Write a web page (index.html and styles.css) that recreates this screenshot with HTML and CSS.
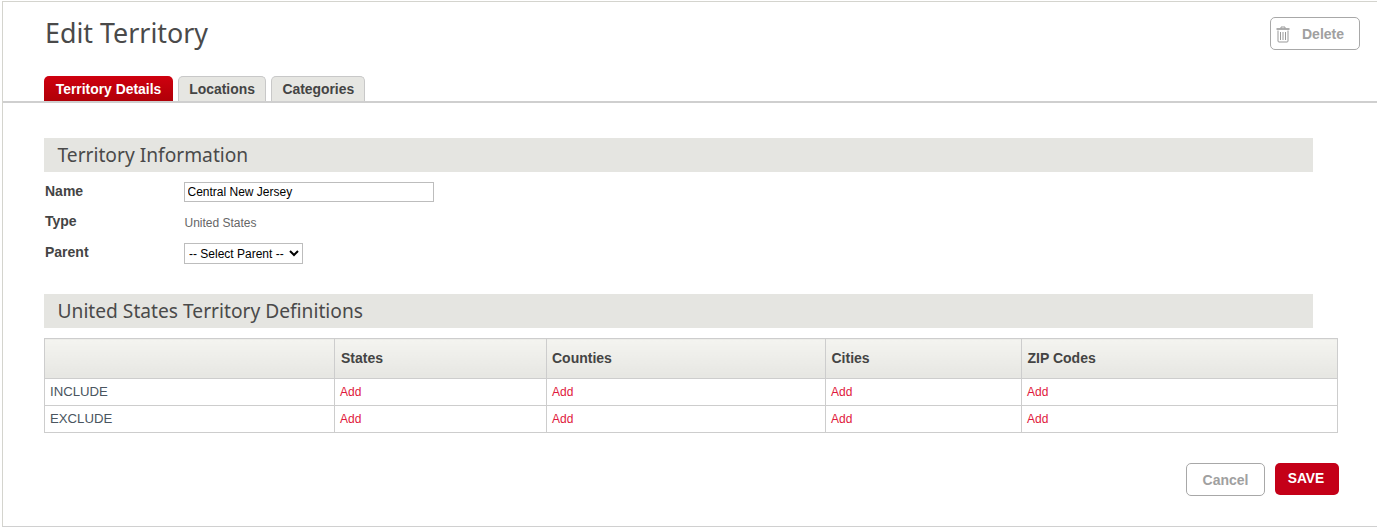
FILE: index.html
```html
<!DOCTYPE html>
<html lang="en">
<head>
<meta charset="utf-8">
<title>Edit Territory</title>
<link rel="stylesheet" href="styles.css">
</head>
<body>
<div class="frame">
  <header class="head">
    <h1 class="title">Edit Territory</h1>
    <button class="btn-delete" type="button">
      <svg class="trash" width="14" height="17" viewBox="0 0 14 17" fill="none" stroke="#999" stroke-width="1">
        <path d="M5 2.500V1h4v1.500"/>
        <path d="M0.500 3h13" stroke-width="1.600"/>
        <path d="M2 4.500V15a1 1 0 0 0 1 1h8a1 1 0 0 0 1-1V4.500"/>
        <path d="M4.500 6v8M7 6v8M9.500 6v8"/>
      </svg>
      <span>Delete</span>
    </button>
  </header>
  <nav class="tabs">
    <a class="tab active">Territory Details</a>
    <a class="tab">Locations</a>
    <a class="tab">Categories</a>
  </nav>
  <main class="content">
    <h2 class="section">Territory Information</h2>
    <div class="form">
      <div class="row row-name">
        <label class="lab">Name</label>
        <input class="inp" type="text" value="Central New Jersey">
      </div>
      <div class="row row-type">
        <label class="lab">Type</label>
        <span class="val">United States</span>
      </div>
      <div class="row row-parent">
        <label class="lab">Parent</label>
        <select class="sel"><option>-- Select Parent --</option></select>
      </div>
    </div>
    <h2 class="section second">United States Territory Definitions</h2>
    <table class="defs">
      <colgroup>
        <col class="c0"><col class="c1"><col class="c2"><col class="c3"><col class="c4">
      </colgroup>
      <thead>
        <tr><th></th><th>States</th><th>Counties</th><th>Cities</th><th>ZIP Codes</th></tr>
      </thead>
      <tbody>
        <tr><td class="rowname">INCLUDE</td><td><a class="add">Add</a></td><td><a class="add">Add</a></td><td><a class="add">Add</a></td><td><a class="add">Add</a></td></tr>
        <tr><td class="rowname">EXCLUDE</td><td><a class="add">Add</a></td><td><a class="add">Add</a></td><td><a class="add">Add</a></td><td><a class="add">Add</a></td></tr>
      </tbody>
    </table>
    <div class="actions">
      <button class="btn-cancel" type="button">Cancel</button>
      <button class="btn-save" type="button">SAVE</button>
    </div>
  </main>
</div>
</body>
</html>
```
FILE: styles.css
```css
* { box-sizing: border-box; }
html, body { margin: 0; padding: 0; background: #fff; }
body { height: 527px; overflow: hidden; font-family: "Liberation Sans", Arial, sans-serif; }
.frame {
  margin: 1px 0 0 2px;
  height: 526px;
  border-top: 1px solid #d4d4ce;
  border-left: 1px solid #d4d4ce;
  border-bottom: 1px solid #d0d0d0;
}
.head {
  display: flex;
  justify-content: space-between;
  align-items: flex-start;
  height: 74px;
  padding: 14px 17px 0 42px;
}
.title {
  margin: 0;
  font: 400 26.850px/34px "Noto Sans", "Open Sans", sans-serif;
  color: #4a4a4a;
}
.btn-delete {
  display: flex;
  align-items: center;
  width: 90px;
  height: 33px;
  margin-top: 1px;
  padding: 0 0 0 5px;
  background: #fff;
  border: 1px solid #a8a8a8;
  border-radius: 5px;
  color: #a0a0a0;
  font: 700 14px "Liberation Sans", Arial, sans-serif;
}
.trash { flex: none; margin: 2px 12px 0 0; }
.tabs {
  display: flex;
  gap: 5px;
  height: 27px;
  padding-left: 41px;
  border-bottom: 2px solid #cfcfcf;
}
.tab {
  height: 25px;
  padding: 0 10.250px;
  border: 1px solid #c8c8c8;
  border-bottom: 0;
  border-radius: 5px 5px 0 0;
  background: #e6e6e2;
  color: #444;
  font: 700 13.900px/25px "Liberation Sans", Arial, sans-serif;
}
.tab.active {
  padding: 0 11.750px;
  border: 0;
  background: linear-gradient(#cf000f, #b00008);
  color: #fff;
  line-height: 27px;
}
.content { padding: 35px 0 0 41px; }
.section {
  width: 1269px;
  height: 34px;
  margin: 0;
  padding-left: 13.500px;
  background: #e5e5e1;
  color: #4a4a4a;
  font: 400 19.200px/34px "Noto Sans", "Open Sans", sans-serif;
}
.section.second { margin-top: 30px; }
.form { padding-top: 10px; }
.row { display: flex; }
.row-name { height: 20px; align-items: center; }
.row-type { height: 21px; margin-top: 9px; align-items: center; }
.row-parent { height: 21px; margin-top: 11px; align-items: center; }
.lab {
  width: 140px;
  padding-left: 1px;
  color: #444;
  font: 700 14px/16px "Liberation Sans", Arial, sans-serif;
}
.row-name .lab { margin-top: -2px; }
.row-parent .lab { margin-top: -4px; }
.row-type .lab { margin-top: -1px; }
.inp {
  width: 250px;
  height: 20px;
  padding: 0 2.500px;
  border: 1px solid #bdbdbd;
  border-radius: 0;
  color: #000;
  font: 12px "Liberation Sans", Arial, sans-serif;
}
.val { color: #666; font: 12px/16px "Liberation Sans", Arial, sans-serif; margin: 3px 0 0 0.500px; }
.sel {
  width: 119px;
  height: 21px;
  padding: 0;
  border: 1px solid #bdbdbd;
  border-radius: 0;
  background: #fff;
  color: #000;
  font: 12px "Liberation Sans", Arial, sans-serif;
}
.defs {
  width: 1293px;
  margin-top: 10px;
  border-collapse: collapse;
  table-layout: fixed;
  border: 1px solid #cdcdcd;
}
.c0 { width: 290px; }
.c1 { width: 212px; }
.c2 { width: 279px; }
.c3 { width: 196px; }
.c4 { width: 316px; }
.defs th, .defs td { border: 1px solid #cdcdcd; padding: 0 5px; text-align: left; }
.defs th {
  height: 40px;
  padding-bottom: 2px;
  background: linear-gradient(#f4f4f0, #e6e6e2);
  color: #444;
  font: 700 14px/16px "Liberation Sans", Arial, sans-serif;
}
.defs th:nth-child(2) { padding-left: 6px; }
.defs th:nth-child(n+4) { padding-left: 5.500px; }
.defs td { height: 27px; font: 12px/16px "Liberation Sans", Arial, sans-serif; }
.defs td.rowname { color: #4a5560; font-size: 13.200px; }
.add { color: #e0183c; }
.actions {
  display: flex;
  justify-content: flex-end;
  align-items: flex-start;
  gap: 10px;
  width: 1295px;
  margin-top: 30px;
}
.btn-cancel {
  width: 79px;
  height: 33px;
  padding: 0;
  background: #fff;
  border: 1px solid #a8a8a8;
  border-radius: 5px;
  color: #a0a0a0;
  font: 700 14px "Liberation Sans", Arial, sans-serif;
}
.btn-save {
  width: 64px;
  height: 32px;
  padding: 0 2px 1px 0;
  background: #c40018;
  border: 0;
  border-radius: 5px;
  color: #fff;
  font: 700 13.800px "Liberation Sans", Arial, sans-serif;
}
```
